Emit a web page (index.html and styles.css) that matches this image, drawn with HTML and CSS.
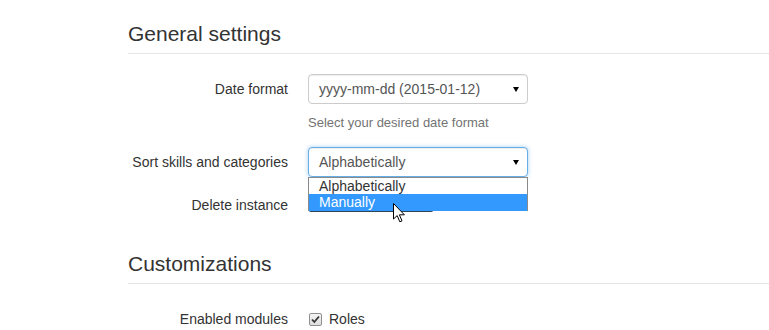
FILE: index.html
```html
<!DOCTYPE html>
<html lang="en">
<head>
    <meta charset="UTF-8">
    <meta name="viewport" content="width=device-width, initial-scale=1.0">
    <title>Settings</title>
    <link rel="stylesheet" href="styles.css">
</head>
<body>
    <div class="page">
        <h2 class="legend">General settings</h2>

        <div class="row">
            <label class="label">Date format</label>
            <div class="control">
                <div class="select">yyyy-mm-dd (2015-01-12)<span class="caret"></span></div>
            </div>
        </div>
        <div class="help">Select your desired date format</div>

        <div class="row">
            <label class="label">Sort skills and categories</label>
            <div class="control">
                <div class="select focus">Alphabetically<span class="caret"></span></div>
                <div class="options">
                    <div class="option">Alphabetically</div>
                    <div class="option selected">Manually</div>
                </div>
                <svg class="cursor" width="13" height="20" viewBox="0 0 13 20">
                    <path d="M0.5 0.5 L0.5 16 L4.2 12.6 L6.8 18.8 L9 17.9 L6.4 11.8 L11.4 11.8 Z" fill="#fff" stroke="#000" stroke-width="1"/>
                </svg>
            </div>
        </div>

        <div class="row row-top">
            <label class="label">Delete instance</label>
            <div class="control">
                <!-- button sits under the open dropdown, only its edge shows -->
                <button class="btn" aria-label="Delete"></button>
            </div>
        </div>

        <h2 class="legend second">Customizations</h2>

        <div class="row">
            <label class="label">Enabled modules</label>
            <div class="control check-row">
                <span class="checkbox">
                    <svg width="11" height="11" viewBox="0 0 11 11">
                        <path d="M2 5.5 L4.3 8 L9 2.5" fill="none" stroke="#333" stroke-width="1.8"/>
                    </svg>
                </span>
                <span>Roles</span>
            </div>
        </div>
    </div>
</body>
</html>
```

FILE: styles.css
```css
* {
    box-sizing: border-box;
    margin: 0;
    padding: 0;
}

body {
    font-family: "Liberation Sans", Arial, sans-serif;
    font-size: 14px;
    color: #333;
    background: #fff;
}

.page {
    padding-left: 128px;
}

.legend {
    font-size: 21px;
    font-weight: normal;
    line-height: 30px;
    margin-top: 19px;
    padding-bottom: 4px;
    border-bottom: 1px solid #e5e5e5;
    margin-bottom: 20px;
    color: #333;
}

.legend.second {
    margin-top: 29px;
}

.row {
    display: flex;
    align-items: center;
    gap: 20px;
    min-height: 30px;
}

.row + .row {
    margin-top: 13px;
}

.row-top {
    align-items: flex-start;
}

.label {
    width: 160px;
    text-align: right;
    line-height: 30px;
}

.control {
    position: relative;
    width: 220px;
}

.select {
    position: relative;
    height: 30px;
    line-height: 28px;
    padding: 0 10px;
    border: 1px solid #ccc;
    border-radius: 4px;
    color: #555;
    background: #fff;
    box-shadow: inset 0 1px 1px rgba(0,0,0,0.075);
}

.select.focus {
    border-color: #66afe9;
    box-shadow: inset 0 1px 1px rgba(0,0,0,0.075), 0 0 4px rgba(102,175,233,0.6);
}

.caret {
    position: absolute;
    right: 8px;
    top: 12px;
    width: 0;
    height: 0;
    border-left: 3px solid transparent;
    border-right: 3px solid transparent;
    border-top: 5px solid #000;
}

.help {
    font-size: 13px;
    line-height: 18px;
    color: #737373;
    margin: 10px 0 15px 180px;
}

.options {
    position: absolute;
    top: 30px;
    left: 0;
    width: 220px;
    background: #fff;
    border: 1px solid #8a8a8a;
    border-bottom: none;
    z-index: 2;
}

.option {
    height: 16px;
    line-height: 16px;
    padding-left: 10px;
    color: #333;
}

.option.selected {
    height: 17px;
    background: #3399ff;
    color: #fff;
}

.cursor {
    position: absolute;
    left: 85px;
    top: 56px;
    z-index: 3;
}

.btn {
    display: block;
    width: 126px;
    height: 22px;
    border: 1px solid #2d4555;
    border-radius: 0 0 3px 3px;
    background: #d9534f;
}

.check-row {
    display: flex;
    align-items: center;
    gap: 7px;
    line-height: 30px;
}

.checkbox {
    display: flex;
    align-items: center;
    justify-content: center;
    width: 13px;
    height: 13px;
    margin-left: 1px;
    border: 1px solid #8f8f8f;
    border-radius: 2px;
    background: linear-gradient(#f4f4f4, #dedede);
}
```
